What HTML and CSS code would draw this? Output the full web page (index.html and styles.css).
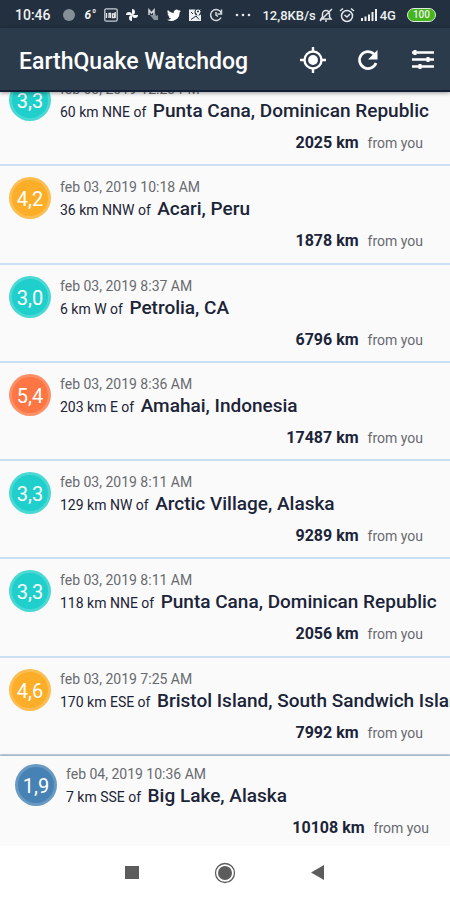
FILE: index.html
```html
<!DOCTYPE html>
<html lang="en">
<head>
<meta charset="utf-8">
<meta name="viewport" content="width=device-width, initial-scale=1">
<title>EarthQuake Watchdog</title>
<link rel="stylesheet" href="styles.css">
</head>
<body>
<div class="status">
  <span class="clock">10:46</span>
  <div class="notices">
    <svg viewBox="0 0 14 14"><circle cx="7" cy="7" r="6" fill="#858f98"/><path d="M3 3a6 6 0 0 0 8 9A6 6 0 1 1 3 3z" fill="#a9b0b7"/></svg>
    <span class="temp">6°</span>
    <svg viewBox="0 0 14 14"><rect x=".8" y=".8" width="12.400" height="12.400" rx="1.500" fill="none" stroke="#c9ced3" stroke-width="1.300"/><path d="M2.500 5v5M5 10V5.500h1.500V10M8.500 6h2v3.500h-2zM11.200 4v6" fill="none" stroke="#e4e7ea" stroke-width="1.300"/></svg>
    <svg viewBox="0 0 14 14" fill="#f4f6f8"><path d="M7 7V1a3 3 0 0 1 0 6zM7 7h6a3 3 0 0 1-6 0zM7 7v6a3 3 0 0 1 0-6zM7 7H1a3 3 0 0 1 6 0z"/></svg>
    <svg viewBox="0 0 14 14"><path d="M3 7V2l2.500 3L8 2v5" fill="none" stroke="#d5d9dd" stroke-width="1.500"/><path d="M4 7h4l1-2 1 3 2-1v5H8z" fill="#8b959e"/></svg>
    <svg viewBox="0 0 24 24" fill="#fff"><path d="M23.600 4.900c-.8.4-1.800.6-2.700.8 1-.6 1.700-1.500 2.100-2.600-.9.5-2 .9-3.100 1.100a4.900 4.900 0 0 0-8.300 4.500C7.600 8.500 4 6.500 1.600 3.600a4.900 4.900 0 0 0 1.500 6.600c-.8 0-1.600-.3-2.200-.6 0 2.400 1.700 4.400 3.900 4.900-.7.2-1.500.2-2.200.1.600 2 2.400 3.400 4.600 3.400A9.900 9.900 0 0 1 0 20a14 14 0 0 0 21.500-12.400c.8-.7 1.500-1.600 2.100-2.700z"/></svg>
    <svg viewBox="0 0 14 14"><path d="M1 1.500h12V13H1z" fill="#eef0f2"/><circle cx="10" cy="4" r="3.500" fill="#22303f"/><path d="M10 8L7.500 4a2.500 2.500 0 1 1 5 0z" fill="#fff"/><circle cx="10" cy="3.500" r="1" fill="#22303f"/><path d="M3 11.500L8 8l3 3.500M3 4l2 2" fill="none" stroke="#22303f"/></svg>
    <svg viewBox="0 0 14 14" fill="none" stroke="#d5d9dd" stroke-width="1.500"><path d="M12.500 6A5.500 5.500 0 1 0 12 9.500M12.500 1.500V6H8.500M7 4v3l2 1.500"/></svg>
  </div>
  <svg class="dots" viewBox="0 0 16 14" fill="#e4e7ea"><circle cx="2" cy="7" r="1.300"/><circle cx="8" cy="7" r="1.300"/><circle cx="14" cy="7" r="1.300"/></svg>
  <div class="signals">
    <span class="rate">12,8KB/s</span>
    <svg viewBox="0 0 16 16" fill="none" stroke="#dfe3e6" stroke-width="1.500"><path d="M3 12h10l-1.500-2V7a3.500 3.500 0 0 0-7 0v3zM7 14h2M2 14L14 2"/></svg>
    <svg class="alarm" viewBox="0 0 16 16" fill="none" stroke="#e4e7ea" stroke-width="1.500"><circle cx="8" cy="9" r="5.500"/><path d="M1 4l3-2.500M15 4l-3-2.500M5.500 8L8 10l3-3"/></svg>
    <svg class="bars" viewBox="0 0 18 14" fill="#eef0f2"><path d="M1 10h2v3H1zM4.500 8.500h2V13h-2zM8 6.500h2V13H8zM11.500 4h2v9h-2zM15 1h2v12h-2z"/></svg>
    <span class="net">4G</span>
    <span class="battery">100</span>
  </div>
</div>
<header class="appbar">
  <h1>EarthQuake Watchdog</h1>
  <button class="action" aria-label="My location"><svg viewBox="0 0 26 26"><circle cx="13" cy="13" r="8.500" fill="none" stroke="#fff" stroke-width="2.400"/><circle cx="13" cy="13" r="4.900" fill="#fff"/><path d="M13 0v4M13 22v4M0 13h4M22 13h4" stroke="#fff" stroke-width="2.400"/></svg></button>
  <button class="action" aria-label="Refresh"><svg viewBox="0 0 26 26"><path d="M21 16A8.500 8.500 0 1 1 19 7l2 2" fill="none" stroke="#fff" stroke-width="2.700"/><path d="M22.500 3v9.500H13z" fill="#fff"/></svg></button>
  <button class="action" aria-label="Filters"><svg viewBox="0 0 26 26" stroke="#fff" stroke-width="2.400"><path d="M2 5.500h22M2 12.500h22M2 19.500h22"/><path d="M5 3v5M18 10v5M10 17v5" stroke-width="3"/></svg></button>
</header>
<main class="quakes">
  <article class="quake">
    <span class="mag teal">3,3</span>
    <div class="info"><time>feb 03, 2019  12:23 PM</time><p class="where">60 km NNE of <b>Punta Cana, Dominican Republic</b></p><p class="away"><b>2025 km</b>from you</p></div>
  </article>
  <article class="quake">
    <span class="mag amber">4,2</span>
    <div class="info"><time>feb 03, 2019 10:18 AM</time><p class="where">36 km NNW of <b>Acari, Peru</b></p><p class="away"><b>1878 km</b>from you</p></div>
  </article>
  <article class="quake">
    <span class="mag teal">3,0</span>
    <div class="info"><time>feb 03, 2019 8:37 AM</time><p class="where">6 km W of <b>Petrolia, CA</b></p><p class="away"><b>6796 km</b>from you</p></div>
  </article>
  <article class="quake">
    <span class="mag coral">5,4</span>
    <div class="info"><time>feb 03, 2019 8:36 AM</time><p class="where">203 km E of <b>Amahai, Indonesia</b></p><p class="away"><b>17487 km</b>from you</p></div>
  </article>
  <article class="quake">
    <span class="mag teal">3,3</span>
    <div class="info"><time>feb 03, 2019 8:11 AM</time><p class="where">129 km NW of <b>Arctic Village, Alaska</b></p><p class="away"><b>9289 km</b>from you</p></div>
  </article>
  <article class="quake">
    <span class="mag teal">3,3</span>
    <div class="info"><time>feb 03, 2019 8:11 AM</time><p class="where">118 km NNE of <b>Punta Cana, Dominican Republic</b></p><p class="away"><b>2056 km</b>from you</p></div>
  </article>
  <article class="quake">
    <span class="mag amber">4,6</span>
    <div class="info"><time>feb 03, 2019 7:25 AM</time><p class="where">170 km ESE of <b>Bristol Island, South Sandwich Islands</b></p><p class="away"><b>7992 km</b>from you</p></div>
  </article>
</main>
<section class="latest">
  <article class="quake">
    <span class="mag blue">1,9</span>
    <div class="info"><time>feb 04, 2019 10:36 AM</time><p class="where">7 km SSE of <b>Big Lake, Alaska</b></p><p class="away"><b>10108 km</b>from you</p></div>
  </article>
</section>
<nav class="navbar">
  <button aria-label="Recent apps"><svg viewBox="0 0 24 24"><path d="M5 5h14v13H5z" fill="#5c5c5c"/></svg></button>
  <button aria-label="Home"><svg viewBox="0 0 24 24"><circle cx="12" cy="12" r="9.500" fill="none" stroke="#5c5c5c" stroke-width="1.300"/><circle cx="12" cy="12" r="7" fill="#5c5c5c"/></svg></button>
  <button aria-label="Back"><svg viewBox="0 0 24 24"><path d="M18 4v15L5 11.500z" fill="#5c5c5c"/></svg></button>
</nav>
</body>
</html>
```
FILE: styles.css
```css
* { box-sizing: border-box; }
body {
  margin: 0;
  min-height: 100vh;
  display: flex;
  flex-direction: column;
  background: #fafafa;
  color: #1b2438;
  font-family: Roboto, sans-serif;
}
h1, p { margin: 0; }
button { padding: 0; border: 0; background: none; }
svg { display: block; }

.status {
  display: flex;
  align-items: center;
  justify-content: space-between;
  height: 28px;
  padding: 2px 14px 0 15px;
  background: #22303f;
  color: #eef0f2;
  font-size: 14px;
  font-weight: 500;
  position: relative;
  z-index: 2;
}
.notices, .signals { display: flex; align-items: center; }
.notices { gap: 7px; }
.notices svg { width: 14px; height: 14px; }
.temp { width: 14px; font-size: 12px; font-style: italic; font-weight: 700; text-align: center; }
.dots { width: 16px; height: 14px; }
.signals { gap: 2px; font-size: 13px; }
.signals svg { width: 16px; height: 16px; }
.signals .alarm { margin: 0 3px; }
.signals .bars { width: 18px; height: 14px; }
.battery {
  width: 29px;
  margin-left: 9px;
  border: 1px solid #dfe9dc;
  border-radius: 7px;
  background: #45b51c;
  font-size: 10px;
  line-height: 12px;
  text-align: center;
}

.appbar {
  display: flex;
  align-items: center;
  gap: 29px;
  height: 64px;
  padding: 2px 14px 0 19px;
  background: #2c3b4b;
  border-bottom: 2px solid #142036;
  box-shadow: 0 1px 4px #0006;
  color: #fff;
  position: relative;
  z-index: 2;
}
.appbar h1 { flex: 1; padding-top: 2px; font-size: 23px; font-weight: 500; white-space: nowrap; }
.action svg { width: 26px; height: 26px; }

.quakes {
  flex: 1;
  display: flex;
  flex-direction: column;
  margin-top: -24px;
}
.quake {
  display: flex;
  flex: 1 0 auto;
  gap: 9px;
  padding: 11px 27px 0 9px;
  overflow: hidden;
}
.quakes .quake { border-bottom: 2px solid #cbdff2; }
.mag {
  flex: none;
  width: 42px;
  height: 42px;
  border: 3px solid #ffffff30;
  border-radius: 50%;
  color: #fff;
  font-size: 20px;
  line-height: 38px;
  text-align: center;
}
.teal { background: #1fcfcb; }
.amber { background: #fdae28; }
.coral { background: #fd7643; }
.blue { background: #4682b4; }
.info { flex: 1; min-width: 0; }
time { display: block; color: #686a70; font-size: 14px; line-height: 20px; white-space: nowrap; }
.where { font-size: 14px; line-height: 24px; white-space: nowrap; }
.where b { margin-left: 3px; font-size: 19px; font-weight: 500; }
.away { margin-top: 7px; color: #686a70; font-size: 14px; line-height: 24px; text-align: right; }
.away b { margin-right: 9px; color: #1b2438; font-size: 16px; font-weight: 700; }

.latest {
  height: 90px;
  box-shadow: 0 -1px 2px #0004;
  background: #fafafa;
}
.latest .quake { padding: 8px 21px 0 15px; }
.navbar {
  display: flex;
  justify-content: center;
  gap: 69px;
  padding: 15px 0;
  background: #fff;
}
.navbar svg { width: 24px; height: 24px; }
```
